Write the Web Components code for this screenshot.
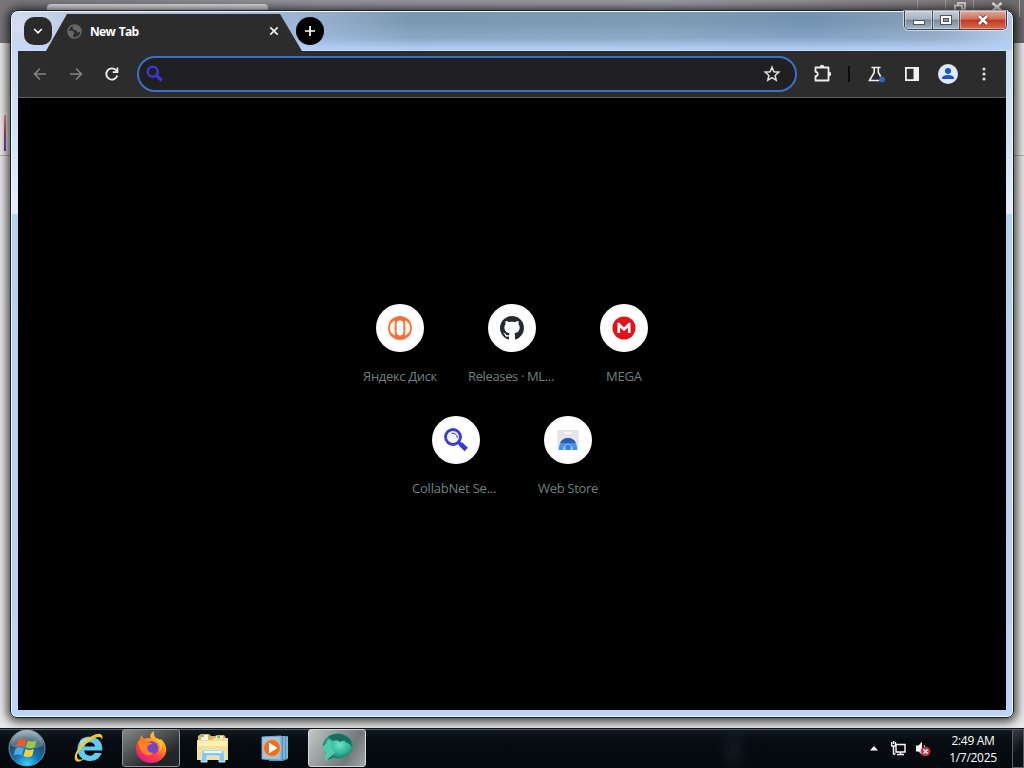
<!DOCTYPE html>
<html lang="en">
<head>
<meta charset="utf-8">
<title>New Tab</title>
<style>
    html, body {
        margin: 0;
        width: 1024px;
        height: 768px;
        overflow: hidden;
        background: #000;
        font-family: "Open Sans", "Noto Sans", sans-serif;
    }
</style>
</head>
<body>
<win-desktop>
    <back-window></back-window>
    <aero-window>
        <tab-strip slot="title" label="New Tab"></tab-strip>
        <browser-toolbar></browser-toolbar>
        <new-tab-page>
            <shortcut-tile label="Яндекс Диск" tracking="-.34px">
                <svg width="24" height="24" viewBox="0 0 24 24"><circle cx="12" cy="12" r="12" fill="#f6713b"/><rect x="8.600" y="4.500" width="6.800" height="15" rx="3.400" fill="#fff"/><path d="M6.500 5Q5.600 12 6.500 19 2 16.500 2 12T6.500 5zM17.500 5Q18.400 12 17.500 19 22 16.500 22 12T17.500 5z" fill="#fff4e4" stroke="#fff4e4"/></svg>
            </shortcut-tile>
            <shortcut-tile label="Releases · ML..." tracking="-.36px" truncated>
                <svg width="24" height="24" viewBox="0 0 16 16"><path fill="#24292f" d="M8 0C3.580 0 0 3.580 0 8c0 3.540 2.290 6.530 5.470 7.590.4.07.55-.17.55-.38 0-.19-.01-.82-.01-1.490-2.010.37-2.530-.49-2.690-.94-.09-.23-.48-.94-.82-1.130-.28-.15-.68-.52-.01-.53.63-.01 1.080.58 1.230.82.72 1.210 1.870.87 2.330.66.07-.52.28-.87.51-1.070-1.780-.2-3.640-.89-3.640-3.950 0-.87.31-1.590.82-2.150-.08-.2-.36-1.020.08-2.120 0 0 .67-.21 2.200.82.64-.18 1.320-.27 2-.27s1.360.09 2 .27c1.530-1.040 2.200-.82 2.200-.82.44 1.100.16 1.920.08 2.120.51.56.82 1.270.82 2.150 0 3.070-1.870 3.750-3.650 3.950.29.25.54.73.54 1.480 0 1.070-.01 1.930-.01 2.200 0 .21.15.46.55.38A8.010 8.010 0 0 0 16 8c0-4.420-3.580-8-8-8z"/></svg>
            </shortcut-tile>
            <shortcut-tile label="MEGA" tracking="-.2px">
                <svg width="24" height="24" viewBox="0 0 24 24"><circle cx="12" cy="12" r="11.500" fill="#e5101c"/><path d="M5.500 17V6.800h1.800L12 11.500l4.700-4.700h1.800V17h-2.600v-5.400L12 15.300l-3.900-3.700V17z" fill="#fff"/></svg>
            </shortcut-tile>
            <shortcut-tile label="CollabNet Se..." tracking="-.22px" truncated>
                <svg width="24" height="24" viewBox="0 0 24 24"><circle cx="9" cy="9" r="7.500" fill="#f5f5ff" stroke="#3b3bd2" stroke-width="2.800"/><path d="M7.500 5.200q5.500-.2 6 4.800" fill="none" stroke="#3b3bd2" stroke-width="1"/><path d="M14 14l3 2.500" stroke="#3b3bd2" stroke-width="3.500"/><path d="M16.500 16l5.800 5.500" stroke="#3b3bd2" stroke-width="4.800"/></svg>
            </shortcut-tile>
            <shortcut-tile label="Web Store" tracking="-.3px">
                <svg width="24" height="24" viewBox="0 0 24 24"><path d="M1.500 2h21v16a3 3 0 0 1-3 3h-15a3 3 0 0 1-3-3z" fill="#e3e3e8"/><rect x="8" y="4" width="8" height="2" rx="1" fill="#f7f7f7"/><path d="M2.500 22a9.500 12 0 0 1 19 0z" fill="#4a8ff0"/><path d="M4 15Q6.500 10 12 10t8 5z" fill="#285bb4"/><path d="M7 22a5 6 0 0 1 10 0z" fill="#8bc6f8"/><circle cx="12" cy="19.500" r="2.700" fill="#2f7ed8"/></svg>
            </shortcut-tile>
        </new-tab-page>
    </aero-window>
    <task-bar slot="taskbar"></task-bar>
</win-desktop>

<script>
class WinDesktop extends HTMLElement {
    connectedCallback() {
        this.attachShadow({ mode: 'open' });
        this.shadowRoot.innerHTML = `
            <style>
                :host {
                    display: grid;
                    grid-template-rows: 728px 40px;
                    width: 1024px;
                    height: 768px;
                }
                .desk {
                    position: relative;
                    overflow: hidden;
                }
            </style>
            <div class="desk"><slot></slot></div>
            <slot name="taskbar"></slot>
        `;
    }
}

class BackWindow extends HTMLElement {
    connectedCallback() {
        this.attachShadow({ mode: 'open' });
        this.shadowRoot.innerHTML = `
            <style>
                :host {
                    display: flex;
                    flex-direction: column;
                    height: 728px;
                    background: #eae8e8;
                }
                .title {
                    display: flex;
                    height: 43px;
                    background: linear-gradient(90deg, #777579, #96949b 30%, #9a9ba3 65%, #858083 90%, #6c6a6c);
                }
                .tab {
                    width: 221px;
                    height: 9px;
                    margin: 4px 0 0 47px;
                    border-radius: 4px 4px 0 0;
                    background: #e6e5e7;
                }
                .buttons {
                    display: flex;
                    width: 106px;
                    height: 17px;
                    margin-left: auto;
                    border-left: 1px solid #a8a5a7;
                }
                .buttons span {
                    box-sizing: border-box;
                    width: 28px;
                    border-right: 1px solid #a8a5a7;
                }
                .buttons span:last-child {
                    width: 46px;
                }
                svg {
                    display: block;
                    margin: 2px 0 0 8px;
                }
                .buttons span:last-child svg {
                    margin-left: 17px;
                }
                .bar {
                    height: 112px;
                    border-bottom: 1px solid #b5b3b5;
                    display: flex;
                    align-items: flex-end;
                }
                .bar i {
                    width: 2px;
                    height: 36px;
                    margin: 0 0 4px 4px;
                    background: linear-gradient(#e88a9b, #c0446c 50%, #5c4bb0);
                }
            </style>
            <div class="title">
                <div class="tab"></div>
                <div class="buttons">
                    <span></span>
                    <span><svg width="12" height="10" viewBox="0 0 12 10"><path d="M4 3V1h7v6H9M1 3.500h7v6H1z" fill="none" stroke="#eee" stroke-width="1.700"/></svg></span>
                    <span><svg width="12" height="10" viewBox="0 0 12 10"><path d="M1.500 1l9 8M10.500 1l-9 8" stroke="#f2f2f2" stroke-width="2.500"/></svg></span>
                </div>
            </div>
            <div class="bar"><i></i></div>
        `;
    }
}

class AeroWindow extends HTMLElement {
    connectedCallback() {
        this.attachShadow({ mode: 'open' });
        this.shadowRoot.innerHTML = `
            <style>
                :host {
                    position: absolute;
                    left: 10px;
                    top: 10px;
                    box-sizing: border-box;
                    width: 1004px;
                    height: 708px;
                    display: flex;
                    flex-direction: column;
                    padding: 0 6px 6px;
                    border: 1px solid #17202b;
                    border-radius: 8px 8px 7px 7px;
                    background:
                        radial-gradient(ellipse 60px 45px at 10px 15px, rgba(222, 226, 242, .8), transparent) 0 0 / 100% 39px no-repeat,
                        linear-gradient(transparent 10px, rgba(176, 204, 243, .3) 27px, rgba(180, 209, 248, .9) 37px) 0 0 / 100% 39px no-repeat,
                        linear-gradient(90deg, #b9cbe6, #9eb6d6 28%, #7997b0 40%, #7d9bb3 65%, #7292b2 80%, #8aa0b8 92%, #b4cbe6) 0 0 / 100% 39px no-repeat,
                        linear-gradient(#c8dcf5 39px, #cee3f3 120px, #e6edfb 202px, #b4d3ec 204px, #b9d1ee 500px, #bdd3f8);
                    box-shadow: inset 0 0 0 1px #f1f9ff, 0 1px 10px 3px rgba(0, 0, 0, .7);
                }
                .title {
                    display: flex;
                    height: 40px;
                    flex: none;
                    align-items: flex-start;
                    justify-content: space-between;
                }
                .controls {
                    display: flex;
                    box-sizing: border-box;
                    width: 103px;
                    height: 19px;
                    border: 1px solid #35414f;
                    border-top: 0;
                    border-radius: 0 0 5px 5px;
                    overflow: hidden;
                    box-shadow: 0 0 0 1px rgba(255, 255, 255, .6);
                }
                .controls span {
                    display: flex;
                    align-items: center;
                    justify-content: center;
                    width: 27px;
                    border-right: 1px solid #45515f;
                    box-shadow: inset 0 0 0 1px rgba(255, 255, 255, .4);
                    background: linear-gradient(#c5ccd5, #a6b2c0 45%, #7b899a 50%, #a4b6cb);
                }
                .controls span:nth-child(2) {
                    width: 26px;
                }
                .controls .close {
                    flex: 1;
                    border: 0;
                    background: linear-gradient(#e0a89b, #d0705c 45%, #c03a22 50%, #dc6a48);
                }
                .client {
                    flex: 1;
                    display: flex;
                    flex-direction: column;
                    margin: 0 1px 1px 1px;
                    background: #000;
                }
            </style>
            <div class="title">
                <slot name="title"></slot>
                <div class="controls">
                    <span><svg width="14" height="12" viewBox="0 0 14 12"><rect x="1.500" y="6.500" width="11" height="4" fill="#fff" stroke="#4b5663"/></svg></span>
                    <span><svg width="14" height="12" viewBox="0 0 14 12"><rect x="1.500" y="1.500" width="11" height="9" fill="#fff" stroke="#4b5663"/><rect x="4.500" y="4.500" width="5" height="3" fill="#8b9aad" stroke="#4b5663"/></svg></span>
                    <span class="close"><svg width="14" height="12" viewBox="0 0 14 12"><path d="M3 2l8 8M11 2l-8 8" stroke="#6b2a24" stroke-width="4.200"/><path d="M3 2l8 8M11 2l-8 8" stroke="#fff" stroke-width="2.600"/></svg></span>
                </div>
            </div>
            <div class="client"><slot></slot></div>
        `;
    }
}

class TabStrip extends HTMLElement {
    connectedCallback() {
        this.attachShadow({ mode: 'open' });
        this.shadowRoot.innerHTML = `
            <style>
                :host {
                    display: flex;
                    height: 40px;
                    padding-left: 7px;
                }
                .search {
                    display: flex;
                    align-items: center;
                    justify-content: center;
                    width: 28px;
                    height: 28px;
                    margin-top: 6px;
                    border-radius: 10px;
                    background: #2a2a2b;
                    z-index: 1;
                }
                .tab {
                    display: flex;
                    align-items: center;
                    box-sizing: border-box;
                    width: 256px;
                    height: 37px;
                    margin: 3px 0 0 -6px;
                    padding: 0 22px 3px 21px;
                    background: #2c2c2d;
                    clip-path: polygon(0 100%, 21px 0, 234px 0, 100% 100%);
                    color: #fff;
                    font-size: 12px;
                    font-weight: 700;
                }
                .label {
                    flex: 1;
                    margin-left: 8px;
                    letter-spacing: -.65px;
                    word-spacing: 1px;
                }
                .add {
                    display: flex;
                    align-items: center;
                    justify-content: center;
                    width: 28px;
                    height: 28px;
                    margin: 6px 0 0 -6px;
                    border-radius: 50%;
                    background: #000;
                }
            </style>
            <div class="search"><svg width="12" height="12" viewBox="0 0 12 12"><path d="M2.200 4l3.800 3.800L9.800 4" fill="none" stroke="#fff" stroke-width="1.700"/></svg></div>
            <div class="tab">
                <svg width="15" height="15" viewBox="0 0 16 16"><circle cx="8" cy="8" r="7" fill="#2c2c2d" stroke="#676767" stroke-width="1.600"/><path d="M1.500 7l4 .3 2.300 2-1.200 2 .2 3.200C3 14 1 11 1.500 7zM7 1.500l-1.500 3L8 6.500l2 .5 1 2 3.500-.5C15 4 11 .8 7 1.500z" fill="#676767"/></svg>
                <span class="label">${this.getAttribute('label')}</span>
                <svg width="12" height="12" viewBox="0 0 12 12"><path d="M2.300 2.300l7.400 7.400M9.700 2.300l-7.400 7.400" stroke="#f2f2f2" stroke-width="1.700"/></svg>
            </div>
            <div class="add"><svg width="12" height="12" viewBox="0 0 12 12"><path d="M6 1v10M1 6h10" stroke="#fff" stroke-width="1.700"/></svg></div>
        `;
    }
}

class BrowserToolbar extends HTMLElement {
    connectedCallback() {
        this.attachShadow({ mode: 'open' });
        this.shadowRoot.innerHTML = `
            <style>
                :host {
                    display: flex;
                    align-items: center;
                    box-sizing: border-box;
                    flex: none;
                    height: 47px;
                    padding: 0 14px 1px 14px;
                    border-bottom: 1px solid #5b5b5b;
                    background: #2c2c2d;
                }
                .nav {
                    display: flex;
                    gap: 20px;
                    width: 105px;
                }
                .omnibox {
                    display: flex;
                    align-items: center;
                    justify-content: space-between;
                    box-sizing: border-box;
                    width: 660px;
                    height: 36px;
                    padding: 0 14px 0 7px;
                    border: 2px solid #3d70c2;
                    border-radius: 18px;
                    background: #202022;
                }
                .actions {
                    flex: 1;
                    display: flex;
                    align-items: center;
                    justify-content: space-between;
                    margin-left: 16px;
                }
                .sep {
                    width: 2px;
                    height: 16px;
                    margin: 0 -1px 0 -3px;
                    background: #0c0c0c;
                }
            </style>
            <div class="nav">
                <svg width="16" height="16" viewBox="0 0 16 16"><path d="M14 8H3M8 2.500L2.500 8 8 13.500" fill="none" stroke="#858585" stroke-width="1.600"/></svg>
                <svg width="16" height="16" viewBox="0 0 16 16"><path d="M2 8h11M8 2.500L13.500 8 8 13.500" fill="none" stroke="#858585" stroke-width="1.600"/></svg>
                <svg width="16" height="16" viewBox="0 0 16 16"><path d="M13.300 9.500A5.600 5.600 0 1 1 12 4.100L13.500 5.800" fill="none" stroke="#f1f1f1" stroke-width="1.800"/><path d="M14.300 1.500v5.500H8.800V5.300h3.800V1.500z" fill="#f1f1f1"/></svg>
            </div>
            <div class="omnibox">
                <svg width="17" height="17" viewBox="0 0 17 17"><circle cx="6.700" cy="6.700" r="5" fill="none" stroke="#3e37d4" stroke-width="2.400"/><path d="M10.500 10.500l5.300 5" stroke="#3e37d4" stroke-width="3.200"/></svg>
                <svg width="18" height="18" viewBox="0 0 18 18"><path d="M9 2.300l1.900 4.500 4.900.4-3.700 3.200 1.100 4.800L9 12.700l-4.200 2.500 1.100-4.800-3.700-3.200 4.900-.4z" fill="none" stroke="#e2e2e2" stroke-width="1.500"/></svg>
            </div>
            <div class="actions">
                <svg width="20" height="20" viewBox="0 0 20 20"><path d="M2.500 3.500h13v13h-13v-4.300a2.200 2.200 0 0 0 0-4.400z" fill="none" stroke="#eee" stroke-width="1.800" stroke-linejoin="round"/><path d="M6.800 3a2.200 2.200 0 0 1 4.400 0zM16 7.800a2.200 2.200 0 0 1 0 4.400z" fill="#eee"/></svg>
                <span class="sep"></span>
                <svg width="20" height="20" viewBox="0 0 20 20"><path d="M4.500 3.500h9M7.200 3.500v5L2.500 16.500h10M11.300 3.500v5l2.400 4" fill="none" stroke="#eee" stroke-width="1.600"/><circle cx="15" cy="15.500" r="2.900" fill="#3268b8"/></svg>
                <svg width="16" height="16" viewBox="0 0 16 16"><rect x="1.900" y="1.900" width="12.200" height="12.200" fill="none" stroke="#f1f1f1" stroke-width="1.800"/><path d="M9.500 2H14v12H9.500z" fill="#f1f1f1"/></svg>
                <svg width="20" height="20" viewBox="0 0 20 20"><circle cx="10" cy="10" r="10" fill="#dfe9fc"/><circle cx="10" cy="7" r="3" fill="#1557c8"/><path d="M4 15v-1.200Q5 11 10 11t6 2.800V15z" fill="#1557c8"/></svg>
                <svg width="16" height="16" viewBox="0 0 16 16"><circle cx="8" cy="3" r="1.600" fill="#ddd"/><circle cx="8" cy="8" r="1.600" fill="#ddd"/><circle cx="8" cy="13" r="1.600" fill="#ddd"/></svg>
            </div>
        `;
    }
}

class NewTabPage extends HTMLElement {
    connectedCallback() {
        this.attachShadow({ mode: 'open' });
        this.shadowRoot.innerHTML = `
            <style>
                :host {
                    flex: 1;
                    display: flex;
                    justify-content: center;
                    background: #000;
                }
                .grid {
                    display: flex;
                    flex-wrap: wrap;
                    justify-content: center;
                    align-content: flex-start;
                    width: 336px;
                    margin-top: 190px;
                }
            </style>
            <div class="grid"><slot></slot></div>
        `;
    }
}

class ShortcutTile extends HTMLElement {
    connectedCallback() {
        this.attachShadow({ mode: 'open' });
        this.shadowRoot.innerHTML = `
            <style>
                :host {
                    display: flex;
                    flex-direction: column;
                    align-items: center;
                    box-sizing: border-box;
                    width: 112px;
                    height: 112px;
                    padding-top: 16px;
                }
                .icon {
                    display: flex;
                    align-items: center;
                    justify-content: center;
                    width: 48px;
                    height: 48px;
                    border-radius: 50%;
                    background: #fff;
                }
                .label {
                    width: 88px;
                    margin-top: 15px;
                    color: #728082;
                    font-size: 13px;
                    line-height: 18px;
                    text-align: center;
                    white-space: nowrap;
                    letter-spacing: ${this.getAttribute('tracking') || '0'};
                }
                :host([truncated]) .label {
                    text-align: left;
                }
            </style>
            <div class="icon"><slot></slot></div>
            <div class="label">${this.getAttribute('label')}</div>
        `;
    }
}

class TaskBar extends HTMLElement {
    connectedCallback() {
        this.attachShadow({ mode: 'open' });
        this.shadowRoot.innerHTML = `
            <style>
                :host {
                    display: flex;
                    box-sizing: border-box;
                    height: 40px;
                    border-top: 1px solid #0b1219;
                    box-shadow: inset 0 1px #53606a;
                    background:
                        radial-gradient(ellipse 16px 26px at 733px 20px, #111823, transparent),
                        linear-gradient(#131b21, #060c11 30%, #04090d);
                }
                .start {
                    width: 54px;
                    display: flex;
                    justify-content: center;
                }
                .apps {
                    display: flex;
                    gap: 4px;
                    padding-left: 6px;
                }
                .app {
                    display: flex;
                    align-items: center;
                    justify-content: center;
                    box-sizing: border-box;
                    width: 58px;
                    height: 38px;
                    border: 1px solid transparent;
                    border-radius: 3px;
                }
                .running {
                    padding-bottom: 2px;
                    border-color: #90979b;
                    background: linear-gradient(150deg, #858889, #505354 40%, #232628 75%);
                }
                .active {
                    padding-bottom: 2px;
                    border-color: #d5d9d9;
                    background: linear-gradient(120deg, #c2c6c6, #8c9293 45%, #71797a 70%, #a1a9a8);
                }
                .tray {
                    display: flex;
                    align-items: center;
                    gap: 8px;
                    margin-left: auto;
                }
                .clock {
                    width: 62px;
                    margin: 0 2px 0 2px;
                    color: #fff;
                    text-align: center;
                    font-size: 12px;
                    line-height: 17px;
                    letter-spacing: -.3px;
                }
                .show {
                    width: 12px;
                    height: 39px;
                    box-sizing: border-box;
                    margin-left: -2px;
                    border: 1px solid #56606a;
                    background: linear-gradient(135deg, #3a4147, #0b1014 55%);
                }
            </style>
            <div class="start">
                <svg width="38" height="38" viewBox="0 0 38 38">
                    <defs>
                        <radialGradient id="orb" cx=".5" cy=".95" r=".95"><stop offset="0" stop-color="#35d7ff"/><stop offset=".35" stop-color="#1475b4"/><stop offset=".7" stop-color="#254c69"/><stop offset="1" stop-color="#9aabb5"/></radialGradient>
                    </defs>
                    <circle cx="19" cy="19" r="18" fill="url(#orb)" stroke="#6d95a8"/>
                    <path d="M3 17A16 16 0 0 1 35 17Q19 22 3 17z" fill="#fff" opacity=".22"/>
                    <path d="M10 11q4-2.500 8.500-.3l-2 7q-4-2-8.500.3z" fill="#ec5a2c"/>
                    <path d="M20 11.500q4 2.200 8.500 0l-2 7q-4.500 2-8.500-.2z" fill="#97ca45"/>
                    <path d="M7.600 19.500q4-2.200 8.300 0l-2 7q-4-2.200-8.300 0z" fill="#4fabe4"/>
                    <path d="M17.500 20q4 2.200 8.500 0l-2 7q-4.500 2.200-8.500 0z" fill="#ffd139"/>
                </svg>
            </div>
            <div class="apps">
                <div class="app">
                    <svg width="32" height="34" viewBox="0 0 32 34">
                        <path d="M17 6C9 6 4.500 11.500 4.500 18S9.500 30 17 30c6 0 10-3 11.500-8h-7c-1 2-2.500 2.700-4.500 2.700-3.500 0-5.500-2-5.700-5.200h18C30 11 25 6 17 6zm-5.500 9.500c.5-2.700 2.500-4.300 5.400-4.300s4.800 1.600 5.200 4.300z" fill="#62c9f2"/>
                        <path d="M7 9q5-5 13-3l-6 3q-6 4-7 9z" fill="#c4f0ff" opacity=".5"/>
                        <path d="M3 30C-2 25 8 11 19 5c7-4 12-3 10 4-.4-3.500-3.500-4-9-1C10 13.500 1 24 5 28c2 1.500 5 0 8-1.500C9 30 5 32 3 30z" fill="#f5c927"/>
                    </svg>
                </div>
                <div class="app running">
                    <svg width="34" height="34" viewBox="0 0 34 34">
                        <defs><linearGradient id="fox" x1=".85" y1="0" x2=".25" y2="1"><stop offset="0" stop-color="#fff44f"/><stop offset=".35" stop-color="#ff9a21"/><stop offset=".65" stop-color="#ff4340"/><stop offset="1" stop-color="#df168b"/></linearGradient></defs>
                        <path d="M20 1q-1 4 2 7 2 0 4 2l1-1c4 4 6 8 5 13-1 6-7 11-15 11S2 27 2 19c0-4 1-7 4-10l1-4 3 4q4-2 7 0-3-4 3-8z" fill="url(#fox)"/>
                        <circle cx="17.500" cy="18" r="6.800" fill="#7641cf"/>
                        <path d="M4 12q5-4 9 .5 3-1 6 1.500-5 0-6 4 1 5 7 5-6 5-11 0-4-4-5-11z" fill="#ff8120"/>
                        <path d="M21 9q7 5 4 13 5-5 2-12z" fill="#ffc52d"/>
                    </svg>
                </div>
                <div class="app">
                    <svg width="34" height="32" viewBox="0 0 34 32">
                        <path d="M2 27V4l3-2h8l2 2h4l2-1h7l2 3v21z" fill="#d7b661"/>
                        <path d="M5 3h7v5H5zM20 4h7v5h-7z" fill="#faf9e7"/>
                        <path d="M5 4h3M21 5h3" stroke="#4fa65b" stroke-width="1.500"/>
                        <path d="M1 8h15l2-2h14v22H1z" fill="#f5df91"/>
                        <path d="M2 9h29v5H2z" fill="#fff0b5"/>
                        <path d="M5 30l1-12h22l1 12h-6v-6H11v6z" fill="#8bc6ec" stroke="#d6eefc"/>
                        <path d="M8 20h18" stroke="#e9f8ff" stroke-width="2"/>
                    </svg>
                </div>
                <div class="app">
                    <svg width="28" height="28" viewBox="0 0 28 28">
                        <path d="M8 2h19v23l-5 2H8z" fill="#4d90c2"/>
                        <path d="M20 2v23M23 2v23M26 3v21" stroke="#b5dcf2"/>
                        <path d="M1 3l19-1v24L1 25z" fill="#9bc8e1" stroke="#6ca6cb"/>
                        <circle cx="11" cy="14" r="8.500" fill="#ee701e" stroke="#f7b078"/>
                        <path d="M8 8.500v11l8.500-5.500z" fill="#fff"/>
                    </svg>
                </div>
                <div class="app active">
                    <svg width="36" height="30" viewBox="0 0 36 30">
                        <defs><radialGradient id="blob" cx=".55" cy=".45" r=".6"><stop offset="0" stop-color="#6ce4c6"/><stop offset=".55" stop-color="#33b697"/><stop offset="1" stop-color="#17705f"/></radialGradient></defs>
                        <ellipse cx="19" cy="14" rx="15" ry="12.500" fill="url(#blob)"/>
                        <path d="M9 5Q19-2 30 6q4 4 3 9-2-4-5-4-3-4-7-1-3-3-7-1z" fill="#176e60"/>
                        <path d="M2 16q5-3 7-9 4 2 4 9 1 3 3 5-3 2-4 6l-5 2q-2-4 0-8-2-3-5-5z" fill="#50caaa"/>
                        <path d="M8 28l8-7-4 6z" fill="#17705f"/>
                    </svg>
                </div>
            </div>
            <div class="tray">
                <svg width="8" height="5" viewBox="0 0 8 5"><path d="M0 4.500h8L4 0z" fill="#fff"/></svg>
                <svg style="margin-left:5px" width="15" height="15" viewBox="0 0 15 15"><path d="M5 3.500h9v7.500H5zM9.500 11v2.500M6 13.500h7M2.500 5v8h2M.5 1v4h4V1M2.500 0v3" fill="none" stroke="#fff" stroke-width="1.400"/></svg>
                <svg style="margin-left:1px" width="17" height="16" viewBox="0 0 17 16"><path d="M1 4.500h2.500L7 .8v13L3.500 10.500H1z" fill="#f4f4f4"/><path d="M9 4q2 3 0 7" stroke="#ddd" fill="none"/><circle cx="10.500" cy="10.500" r="4.800" fill="#cf2e47"/><path d="M8.500 8.500l4 4M12.500 8.500l-4 4" stroke="#fff" stroke-width="1.500"/></svg>
                <div class="clock">2:49 AM<br>1/7/2025</div>
                <div class="show"></div>
            </div>
        `;
    }
}

customElements.define('win-desktop', WinDesktop);
customElements.define('back-window', BackWindow);
customElements.define('aero-window', AeroWindow);
customElements.define('tab-strip', TabStrip);
customElements.define('browser-toolbar', BrowserToolbar);
customElements.define('new-tab-page', NewTabPage);
customElements.define('shortcut-tile', ShortcutTile);
customElements.define('task-bar', TaskBar);
</script>
</body>
</html>
